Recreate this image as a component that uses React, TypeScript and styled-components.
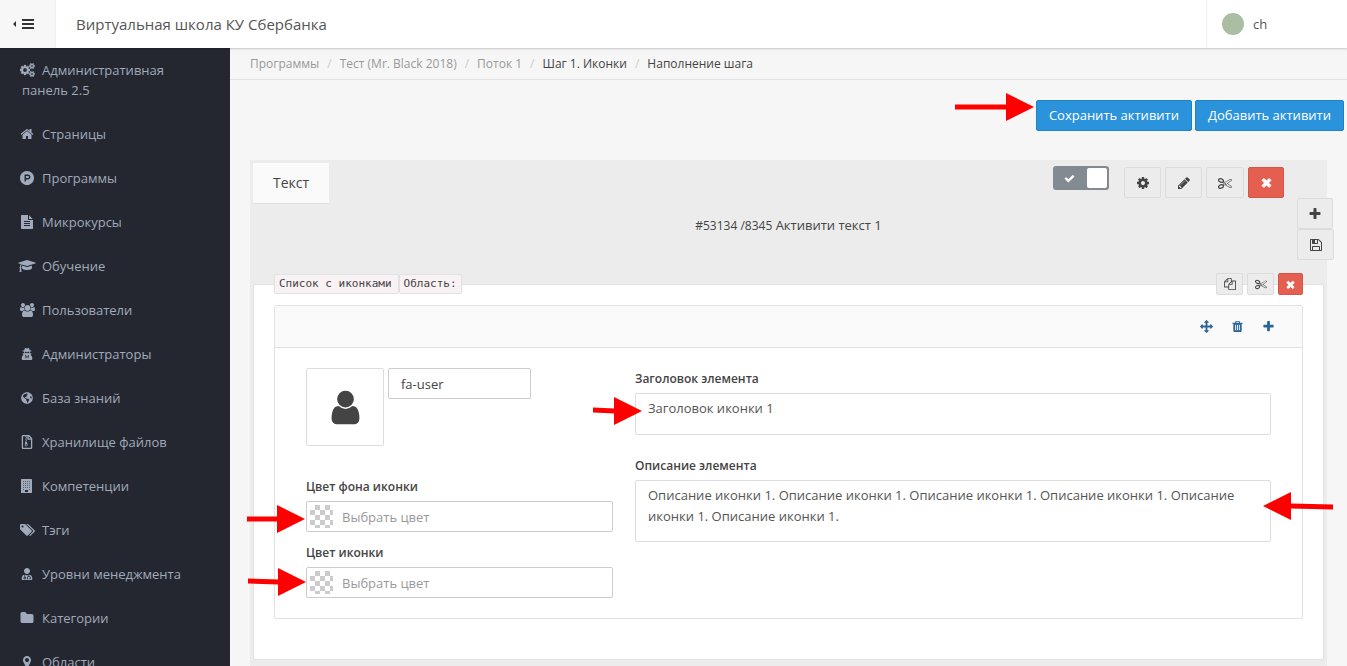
import React from "react";
import styled, { createGlobalStyle, css } from "styled-components";
import { FaGlobeAmericas, FaRegFileArchive, FaUserMd, FaUserSecret } from "react-icons/fa";

const GlobalStyle = createGlobalStyle`
  *, *::before, *::after { box-sizing: border-box; }
  body {
    margin: 0;
    background: #f6f6f6;
    color: #444;
    font: 13px/20px "Open Sans", "Noto Sans", sans-serif;
  }
  button, input, textarea { font: inherit; color: inherit; margin: 0; }
  a { color: inherit; text-decoration: none; }
`;

/* ---------- icons ---------- */

const glyphs = {
  cogs: {
    w: 1920,
    d: "M896 896q0-106-75-181t-181-75-181 75-75 181 75 181 181 75 181-75 75-181zm768 512q0-52-38-90t-90-38-90 38-38 90q0 53 37.5 90.5t90.5 37.5 90.5-37.5 37.5-90.5zm0-1024q0-52-38-90t-90-38-90 38-38 90q0 53 37.5 90.5t90.5 37.5 90.5-37.5 37.5-90.5zm-384 421v185q0 10-7 19.5t-16 10.5l-155 24q-11 35-32 76 34 48 90 115 7 11 7 20 0 12-7 19-23 30-82.5 89.5t-78.5 59.5q-11 0-21-7l-115-90q-37 19-77 31-11 108-23 155-7 24-30 24h-186q-11 0-20-7.5t-10-17.5l-23-153q-34-10-75-31l-118 89q-7 7-20 7-11 0-21-8-144-133-144-160 0-9 7-19 10-14 41-53t47-61q-23-44-35-82l-152-24q-10-1-17-9.5t-7-19.5v-185q0-10 7-19.5t16-10.5l155-24q11-35 32-76-34-48-90-115-7-11-7-20 0-12 7-20 22-30 82-89t79-59q11 0 21 7l115 90q34-18 77-32 11-108 23-154 7-24 30-24h186q11 0 20 7.5t10 17.5l23 153q34 10 75 31l118-89q8-7 20-7 11 0 21 8 144 133 144 160 0 8-7 19-12 16-42 54t-45 60q23 48 34 82l152 23q10 2 17 10.5t7 19.5zm640 533v140q0 16-149 31-12 27-30 52 51 113 51 138 0 4-4 7-122 71-124 71-8 0-46-47t-52-68q-20 2-30 2t-30-2q-14 21-52 68t-46 47q-2 0-124-71-4-3-4-7 0-25 51-138-18-25-30-52-149-15-149-31v-140q0-16 149-31 13-29 30-52-51-113-51-138 0-4 4-7 4-2 35-20t59-34 30-16q8 0 46 46.5t52 67.5q20-2 30-2t30 2q51-71 92-112l6-2q4 0 124 70 4 3 4 7 0 25-51 138 17 23 30 52 149 15 149 31zm0-1024v140q0 16-149 31-12 27-30 52 51 113 51 138 0 4-4 7-122 71-124 71-8 0-46-47t-52-68q-20 2-30 2t-30-2q-14 21-52 68t-46 47q-2 0-124-71-4-3-4-7 0-25 51-138-18-25-30-52-149-15-149-31v-140q0-16 149-31 13-29 30-52-51-113-51-138 0-4 4-7 4-2 35-20t59-34 30-16q8 0 46 46.5t52 67.5q20-2 30-2t30 2q51-71 92-112l6-2q4 0 124 70 4 3 4 7 0 25-51 138 17 23 30 52 149 15 149 31z",
  },
  home: {
    w: 1792,
    d: "M1472 992v480q0 26-19 45t-45 19h-384v-384h-256v384h-384q-26 0-45-19t-19-45v-480q0-1 .5-3t.5-3l575-474 575 474q1 2 1 6zm223-69l-62 74q-8 9-21 11h-3q-13 0-21-7l-692-577-692 577q-12 8-24 7-13-2-21-11l-62-74q-8-10-7-23.5t11-21.5l719-599q32-26 76-26t76 26l244 204v-195q0-14 9-23t23-9h192q14 0 23 9t9 23v408l219 182q10 8 11 21.5t-7 23.5z",
  },
  product: {
    w: 1792,
    d: "M1150 762q0 56-39.5 95t-95.5 39h-253v-269h253q56 0 95.5 39.5t39.5 95.5zm179 0q0-130-91.5-222t-222.5-92h-433v896h180v-269h253q130 0 222-91.5t92-221.5zm463 134q0 182-71 348t-191 286-286 191-348 71-348-71-286-191-191-286-71-348 71-348 191-286 286-191 348-71 348 71 286 191 191 286 71 348z",
  },
  fileText: {
    w: 1792,
    d: "M1596 476q14 14 28 36h-472v-472q22 14 36 28zm-476 164h544v1056q0 40-28 68t-68 28h-1344q-40 0-68-28t-28-68v-1600q0-40 28-68t68-28h800v544q0 40 28 68t68 28zm160 736v-64q0-14-9-23t-23-9h-704q-14 0-23 9t-9 23v64q0 14 9 23t23 9h704q14 0 23-9t9-23zm0-256v-64q0-14-9-23t-23-9h-704q-14 0-23 9t-9 23v64q0 14 9 23t23 9h704q14 0 23-9t9-23zm0-256v-64q0-14-9-23t-23-9h-704q-14 0-23 9t-9 23v64q0 14 9 23t23 9h704q14 0 23-9t9-23z",
  },
  graduation: {
    w: 2304,
    d: "M1774 836l18 316q4 69-82 128t-235 93.5-323 34.5-323-34.5-235-93.5-82-128l18-316 574 181q22 7 48 7t48-7zm530-324q0 23-22 31l-1120 352q-4 1-10 1t-10-1l-652-206q-43 34-71 111.5t-34 178.5q63 36 63 109 0 69-58 107l58 433q2 14-8 25-9 11-24 11h-192q-15 0-24-11-10-11-8-25l58-433q-58-38-58-107 0-73 65-111 11-207 98-330l-333-104q-22-8-22-31t22-31l1120-352q4-1 10-1t10 1l1120 352q22 8 22 31z",
  },
  users: {
    w: 1920,
    d: "M593 896q-162 5-265 128h-134q-82 0-138-40.5t-56-118.5q0-353 124-353 6 0 43.5 21t97.5 42.5 119 21.5q67 0 133-23-5 37-5 66 0 139 81 256zm1071 637q0 120-73 189.5t-194 69.5h-874q-121 0-194-69.5t-73-189.5q0-53 3.5-103.5t14-109 26.5-108.5 43-97.5 62-81 85.5-53.5 111.5-20q10 0 43 21.5t73 48 107 48 135 21.5 135-21.5 107-48 73-48 43-21.5q61 0 111.5 20t85.5 53.5 62 81 43 97.5 26.5 108.5 14 109 3.5 103.5zm-1024-1277q0 106-75 181t-181 75-181-75-75-181 75-181 181-75 181 75 75 181zm704 384q0 159-112.5 271.5t-271.5 112.5-271.5-112.5-112.5-271.5 112.5-271.5 271.5-112.5 271.5 112.5 112.5 271.5zm576 225q0 78-56 118.5t-138 40.5h-134q-103-123-265-128 81-117 81-256 0-29-5-66 66 23 133 23 59 0 119-21.5t97.5-42.5 43.5-21q124 0 124 353zm-128-609q0 106-75 181t-181 75-181-75-75-181 75-181 181-75 181 75 75 181z",
  },
  tags: {
    w: 1920,
    d: "M448 448q0-53-37.5-90.5t-90.5-37.5-90.5 37.5-37.5 90.5 37.5 90.5 90.5 37.5 90.5-37.5 37.5-90.5zm1067 576q0 53-37 90l-491 492q-39 37-91 37-53 0-90-37l-715-716q-38-37-64.5-101t-26.5-117v-416q0-52 38-90t90-38h416q53 0 117 26.5t102 64.5l715 714q37 39 37 91zm384 0q0 53-37 90l-491 492q-39 37-91 37-36 0-59-14t-53-45l470-470q37-37 37-90 0-52-37-91l-715-714q-38-38-102-64.5t-117-26.5h224q53 0 117 26.5t102 64.5l715 714q37 39 37 91z",
  },
  folder: {
    w: 1792,
    d: "M1728 608v704q0 92-66 158t-158 66h-1216q-92 0-158-66t-66-158v-960q0-92 66-158t158-66h320q92 0 158 66t66 158v32h672q92 0 158 66t66 158z",
  },
  marker: {
    w: 1792,
    d: "M1152 640q0-106-75-181t-181-75-181 75-75 181 75 181 181 75 181-75 75-181zm256 0q0 109-33 179l-364 774q-16 33-47.5 52t-67.5 19-67.5-19-46.5-52l-365-774q-33-70-33-179 0-212 150-362t362-150 362 150 150 362z",
  },
  cog: {
    w: 1792,
    d: "M1152 896q0-106-75-181t-181-75-181 75-75 181 75 181 181 75 181-75 75-181zm512-109v222q0 12-8 23t-20 13l-185 28q-19 54-39 91 35 50 107 138 10 12 10 25t-9 23q-27 37-99 108t-94 71q-12 0-26-9l-138-108q-44 23-91 38-16 136-29 186-7 28-36 28h-222q-14 0-24.5-8.5t-11.5-21.5l-28-184q-49-16-90-37l-141 107q-10 9-25 9-14 0-25-11-126-114-165-168-7-10-7-23 0-12 8-23 15-21 51-66.5t54-70.5q-27-50-41-99l-183-27q-13-2-21-12.5t-8-23.5v-222q0-12 8-23t19-13l186-28q14-46 39-92-40-57-107-138-10-12-10-24 0-10 9-23 26-36 98.5-107.5t94.5-71.5q13 0 26 10l138 107q44-23 91-38 16-136 29-186 7-28 36-28h222q14 0 24.5 8.5t11.5 21.5l28 184q49 16 90 37l142-107q9-9 24-9 13 0 25 10 129 119 165 170 7 8 7 22 0 12-8 23-15 21-51 66.5t-54 70.5q26 50 41 98l183 28q13 2 21 12.5t8 23.5z",
  },
  pencil: {
    w: 1792,
    d: "M491 1536l91-91-235-235-91 91v107h128v128h107zm523-928q0-22-22-22-10 0-17 7l-542 542q-7 7-7 17 0 22 22 22 10 0 17-7l542-542q7-7 7-17zm-54-192l416 416-832 832h-416v-416zm683 96q0 53-37 90l-166 166-416-416 166-165q36-38 90-38 53 0 91 38l235 234q37 39 37 91z",
  },
  scissors: {
    w: 1792,
    d: "M960 896q26 0 45 19t19 45-19 45-45 19-45-19-19-45 19-45 45-19zm300 64l507 398q28 20 25 56-5 35-35 51l-128 64q-13 7-29 7-17 0-31-8l-690-387-110 66q-8 4-12 5 14 49 10 97-7 77-56 147.5t-132 123.5q-132 84-277 84-136 0-222-78-90-84-79-207 7-76 56-147t131-124q132-84 278-84 83 0 151 31 9-13 22-22l122-73-122-73q-13-9-22-22-68 31-151 31-146 0-278-84-82-53-131-124t-56-147q-5-59 15.5-113t63.5-93q85-79 222-79 145 0 277 84 83 52 132 123t56 148q4 48-10 97 4 1 12 5l110 66 690-387q14-8 31-8 16 0 29 7l128 64q30 16 35 51 3 36-25 56zm-681-260q46-42 21-108t-106-117q-92-59-192-59-74 0-113 36-46 42-21 108t106 117q92 59 192 59 74 0 113-36zm-85 745q81-51 106-117t-21-108q-39-36-113-36-100 0-192 59-81 51-106 117t21 108q39 36 113 36 100 0 192-59zm178-613l96 58v-11q0-36 33-56l14-8-79-44-26 26q-3 3-10 11t-12 12q-2 2-4 3.5t-3 2.5zm224 224l96 32 736-576-128-64-768 431v113l-160 96 9 8q2 2 7 6 4 4 11 12t11 12l26 26zm704 416l128-64-520-408-177 138q-2 3-13 7z",
  },
  times: {
    w: 1792,
    d: "M1490 1322q0 40-28 68l-136 136q-28 28-68 28t-68-28l-294-294-294 294q-28 28-68 28t-68-28l-136-136q-28-28-28-68t28-68l294-294-294-294q-28-28-28-68t28-68l136-136q28-28 68-28t68 28l294 294 294-294q28-28 68-28t68 28l136 136q28 28 28 68t-28 68l-294 294 294 294q28 28 28 68z",
  },
  plus: {
    w: 1792,
    d: "M1600 736v192q0 40-28 68t-68 28h-416v416q0 40-28 68t-68 28h-192q-40 0-68-28t-28-68v-416h-416q-40 0-68-28t-28-68v-192q0-40 28-68t68-28h416v-416q0-40 28-68t68-28h192q40 0 68 28t28 68v416h416q40 0 68 28t28 68z",
  },
  floppy: {
    w: 1792,
    d: "M512 1536h768v-384h-768v384zm896 0h128v-896q0-14-10-38.5t-20-34.5l-281-281q-10-10-34-20t-39-10v416q0 40-28 68t-68 28h-576q-40 0-68-28t-28-68v-416h-128v1280h128v-416q0-40 28-68t68-28h832q40 0 68 28t28 68v416zm-384-928v-320q0-13-9.5-22.5t-22.5-9.5h-192q-13 0-22.5 9.5t-9.5 22.5v320q0 13 9.5 22.5t22.5 9.5h192q13 0 22.5-9.5t9.5-22.5zm640 32v928q0 40-28 68t-68 28h-1344q-40 0-68-28t-28-68v-1344q0-40 28-68t68-28h928q40 0 88 20t76 48l280 280q28 28 48 76t20 88z",
  },
  check: {
    w: 1792,
    d: "M1671 566q0 40-28 68l-724 724-136 136q-28 28-68 28t-68-28l-136-136-362-362q-28-28-28-68t28-68l136-136q28-28 68-28t68 28l294 295 656-657q28-28 68-28t68 28l136 136q28 28 28 68z",
  },
  files: {
    w: 1792,
    d: "M1696 384q40 0 68 28t28 68v1216q0 40-28 68t-68 28h-960q-40 0-68-28t-28-68v-288h-544q-40 0-68-28t-28-68v-672q0-40 20-88t48-76l408-408q28-28 76-48t88-20h416q40 0 68 28t28 68v328q68-40 128-40h416zm-544 213l-299 299h299v-299zm-640-384l-299 299h299v-299zm196 647l316-316v-416h-384v416q0 40-28 68t-68 28h-416v640h512v-256q0-40 20-88t48-76zm956 804v-1152h-384v416q0 40-28 68t-68 28h-416v640h896z",
  },
  arrows: {
    w: 1792,
    d: "M1792 896q0 26-19 45l-256 256q-19 19-45 19t-45-19-19-45v-128h-384v384h128q26 0 45 19t19 45-19 45l-256 256q-19 19-45 19t-45-19l-256-256q-19-19-19-45t19-45 45-19h128v-384h-384v128q0 26-19 45t-45 19-45-19l-256-256q-19-19-19-45t19-45l256-256q19-19 45-19t45 19 19 45v128h384v-384h-128q-26 0-45-19t-19-45 19-45l256-256q19-19 45-19t45 19l256 256q19 19 19 45t-19 45-45 19h-128v384h384v-128q0-26 19-45t45-19 45 19l256 256q19 19 19 45z",
  },
  trash: {
    w: 1792,
    d: "M704 1376v-704q0-14-9-23t-23-9h-64q-14 0-23 9t-9 23v704q0 14 9 23t23 9h64q14 0 23-9t9-23zm256 0v-704q0-14-9-23t-23-9h-64q-14 0-23 9t-9 23v704q0 14 9 23t23 9h64q14 0 23-9t9-23zm256 0v-704q0-14-9-23t-23-9h-64q-14 0-23 9t-9 23v704q0 14 9 23t23 9h64q14 0 23-9t9-23zm-544-992h448l-48-117q-7-9-17-11h-317q-10 2-17 11zm928 32v64q0 14-9 23t-23 9h-96v948q0 83-47 143.5t-113 60.5h-832q-66 0-113-58.5t-47-141.5v-952h-96q-14 0-23-9t-9-23v-64q0-14 9-23t23-9h309l70-167q15-37 54-63t79-26h320q40 0 79 26t54 63l70 167h309q14 0 23 9t9 23z",
  },
  user: {
    w: 1792,
    d: "M1536 1399q0 109-62.5 187t-150.5 78h-854q-88 0-150.5-78t-62.5-187q0-85 8.5-160.5t31.5-152 58.5-131 94-89 134.5-34.5q131 128 313 128t313-128q76 0 134.5 34.5t94 89 58.5 131 31.5 152 8.5 160.5zm-256-887q0 159-112.5 271.5t-271.5 112.5-271.5-112.5-112.5-271.5 112.5-271.5 271.5-112.5 271.5 112.5 112.5 271.5z",
  },
};

type GlyphName = keyof typeof glyphs;

const Glyph = ({ name, size = 14, weight = 0 }: { name: GlyphName; size?: number; weight?: number }) => (
  <svg
    height={size}
    width={(size * glyphs[name].w) / 1792}
    viewBox={`0 0 ${glyphs[name].w} 1792`}
    fill="currentColor"
    stroke="currentColor"
    strokeWidth={weight}
    aria-hidden="true"
  >
    <path d={glyphs[name].d} />
  </svg>
);

const BuildingIcon = () => (
  <svg width="12" height="14" viewBox="0 0 12 14" aria-hidden="true">
    <path fill="currentColor" d="M.5 0h10q.5 0 .5.5v13q0 .5-.5.5H.5Q0 14 0 13.500V.5Q0 0 .5 0z" />
    <path
      fill="#24272f"
      opacity=".55"
      d="M2 2v1h1V2zM4 2v1h1V2zM6 2v1h1V2zM8 2v1h1V2zM2 4v1h1V4zM4 4v1h1V4zM6 4v1h1V4zM8 4v1h1V4zM2 6v1h1V6zM4 6v1h1V6zM6 6v1h1V6zM8 6v1h1V6zM2 8v1h1V8zM4 8v1h1V8zM6 8v1h1V8zM8 8v1h1V8zM2 10v1h1v-1zM8 10v1h1v-1z"
    />
    <path fill="#24272f" d="M4 11v2h3v-2z" />
  </svg>
);

/* ---------- page frame ---------- */

const Page = styled.div`
  display: flex;
  flex-direction: column;
  height: 100vh;
  overflow: hidden;
`;

const Header = styled.header`
  position: relative;
  z-index: 1;
  display: flex;
  flex: none;
  height: 48px;
  background: #fff;
  box-shadow: 0 1px 2px rgba(0, 0, 0, 0.2);
`;

const MenuToggle = styled.button`
  display: flex;
  align-items: center;
  width: 56px;
  padding: 0 0 0 13px;
  border: 0;
  border-right: 1px solid #f0f0f0;
  background: #f7f7f7;
`;

const SiteTitle = styled.h1`
  flex: 1;
  margin: 0;
  padding-left: 20px;
  color: #555;
  font-size: 15px;
  font-weight: 400;
  line-height: 48px;
`;

const Account = styled.a`
  display: flex;
  align-items: center;
  gap: 9px;
  width: 141px;
  padding-left: 15px;
  border-left: 1px solid #eee;
  color: #555;
`;

const Avatar = styled.span`
  width: 22px;
  height: 22px;
  border-radius: 50%;
  background: #abbea3;
`;

const Columns = styled.div`
  display: flex;
  flex: 1;
  min-height: 0;
`;

const Sidebar = styled.nav`
  flex: none;
  width: 230px;
  overflow: hidden;
  background: #24272f;
`;

const SideLink = styled.a<{ $wrap?: boolean }>`
  display: block;
  padding: 12px 60px 12px 22px;
  color: #a0aabb;
  white-space: ${(p) => (p.$wrap ? "normal" : "nowrap")};
`;

const SideIcon = styled.span`
  display: inline-flex;
  justify-content: center;
  align-items: center;
  width: 18px;
  height: 20px;
  margin: 0 6px 0 -4px;
  vertical-align: top;
`;

const Main = styled.main`
  flex: 1;
  min-width: 0;
  overflow: hidden;
`;

const Breadcrumbs = styled.ol`
  display: flex;
  margin: 0;
  padding: 6px 20px 5px;
  border-bottom: 1px solid #e2e2e2;
  list-style: none;
  font-size: 12px;

  li + li::before {
    content: "/";
    padding: 0 8px;
    color: #ccc;
  }
`;

const Crumb = styled.li<{ $strong?: boolean }>`
  color: ${(p) => (p.$strong ? "#444" : "#999")};
`;

const PageActions = styled.div`
  position: relative;
  display: flex;
  gap: 3px;
  width: max-content;
  margin: 20px 3px 29px auto;
`;

const PrimaryButton = styled.button`
  height: 31px;
  padding: 0 12px 2px;
  border: 1px solid #1f83c8;
  border-radius: 2px;
  background: #2a93dc;
  color: #fff;
  font-weight: 500;
`;

/* ---------- activity ---------- */

const Activity = styled.section`
  position: relative;
  min-height: 506px;
  margin: 0 20px;
  padding: 3px;
  background: #ececec;
`;

const ActivityTop = styled.div`
  display: flex;
  justify-content: space-between;
  align-items: flex-start;
`;

const Tab = styled.a`
  padding: 0 20px;
  border-bottom: 1px solid #e0e0e0;
  background: #fafafa;
  font-size: 14px;
  line-height: 40px;
`;

const Tools = styled.div`
  display: flex;
  gap: 4px;
  padding: 4px 40px 0 0;
`;

const Switch = styled.label`
  display: flex;
  align-items: center;
  justify-content: space-between;
  width: 56px;
  height: 24px;
  margin: -1px 11px 0 0;
  padding: 0 2px 0 11px;
  border-radius: 3px;
  background: #838b92;
  color: #fff;

  input {
    appearance: none;
    width: 20px;
    height: 20px;
    border-radius: 2px;
    background: #fff;
  }
`;

const ToolButton = styled.button<{ $w: number; $small?: boolean; $danger?: boolean }>`
  display: flex;
  align-items: center;
  justify-content: center;
  width: ${(p) => p.$w}px;
  height: ${(p) => (p.$small ? 22 : 31)}px;
  padding: 0;
  border: 1px solid #dcdcdc;
  border-radius: 2px;
  background: #ececec;
  color: #444;
  ${(p) =>
    p.$danger &&
    css`
      border-color: #d25748;
      background: #e55f50;
      color: #fff;
    `}
`;

const ActivityTitle = styled.p`
  margin: 11px 0 0;
  text-align: center;

  small { font-size: 12px; }
`;

const SideTools = styled.div`
  position: absolute;
  top: 38px;
  right: -7px;
  width: 37px;
`;

const Card = styled.div`
  margin: 48px 0 0;
  padding: 0 20px 40px;
  border: 1px solid #e2e2e2;
  border-radius: 2px;
  background: #fff;
`;

const CardTop = styled.div`
  display: flex;
  justify-content: space-between;
  align-items: center;
  margin-top: -12px;
  margin-bottom: 10px;
`;

const Tags = styled.div`
  display: flex;
`;

const Tag = styled.code`
  height: 20px;
  padding: 0 4px;
  border: 1px solid #e2e2e2;
  border-radius: 2px;
  background: #f9f2f4;
  font: 11px/18px "DejaVu Sans Mono", monospace;

  &:first-child {
    padding-right: 6px;
  }
`;

const CardTools = styled.div`
  display: flex;
  gap: 4px;
`;

const Item = styled.div`
  border: 1px solid #e2e2e2;
  border-radius: 2px;
`;

const ItemHeader = styled.div`
  display: flex;
  align-items: center;
  justify-content: flex-end;
  gap: 18px;
  height: 42px;
  padding-right: 27px;
  border-bottom: 1px solid #e2e2e2;
  background: #fafafa;
`;

const LinkButton = styled.button`
  display: flex;
  padding: 0;
  border: 0;
  background: none;
  color: #2a6496;
`;

const ItemBody = styled.div`
  display: grid;
  grid-template-columns: 307fr 636fr;
  gap: 22px;
  padding: 20px 31px;
`;

const IconPicker = styled.div`
  display: flex;
  align-items: flex-start;
  gap: 4px;
  margin-bottom: 30px;
`;

const IconPreview = styled.div`
  display: flex;
  align-items: center;
  justify-content: center;
  width: 78px;
  height: 78px;
  border: 1px solid #ddd;
  border-radius: 2px;
`;

const inputLook = css`
  height: 31px;
  border: 1px solid #ccc;
  border-radius: 2px;
  background: #fff;
`;

const IconInput = styled.input`
  ${inputLook}
  width: 143px;
  padding: 0 12px;
`;

const Field = styled.div<{ $gap?: number }>`
  margin-bottom: ${(p) => p.$gap ?? 0}px;
`;

const FieldLabel = styled.label`
  display: block;
  margin-bottom: 3px;
  font-size: 12px;
  font-weight: 600;
  line-height: 22px;
`;

const Anchor = styled.div`
  position: relative;
`;

const ColorBox = styled.div`
  ${inputLook}
  display: flex;
  align-items: center;
  gap: 9px;
  padding-left: 3px;

  input {
    flex: 1;
    min-width: 0;
    padding: 0;
    border: 0;
    outline: 0;
    background: none;
  }
  input::placeholder { color: #999; opacity: 1; }
`;

const Swatch = styled.span`
  width: 23px;
  height: 23px;
  background: conic-gradient(#ccc 25%, #fff 0 50%, #ccc 0 75%, #fff 0) 0 0 / 10px 10px;
`;

const TextBox = styled.textarea<{ $h: number }>`
  display: block;
  width: 100%;
  height: ${(p) => p.$h}px;
  padding: 4px 12px;
  border: 1px solid #ddd;
  border-radius: 2px;
  background: #fff;
  color: #555;
  line-height: 21px;
  resize: none;
  overflow: hidden;
`;

/* ---------- pointer arrows ---------- */

const ArrowSvg = styled.svg<{ $top: number; $left?: number; $right?: number }>`
  position: absolute;
  top: ${(p) => p.$top}px;
  ${(p) => (p.$left !== undefined ? `left: ${p.$left}px;` : `right: ${p.$right}px;`)}
  pointer-events: none;
`;

type ArrowProps = { length: number; top: number; left?: number; right?: number; tilt?: number };

const Arrow = ({ length, top, left, right, tilt = 0 }: ArrowProps) => {
  const neck = length - 28;
  const tail = 14 - tilt;
  return (
    <ArrowSvg $top={top} $left={left} $right={right} width={length} height={28} aria-hidden="true">
      <g fill="#f00" transform={right !== undefined ? `translate(${length} 28) rotate(180)` : undefined}>
        <path d={`M0 ${tail - 2.5}L${neck + 1} 11.500v5L0 ${tail + 2.5}z`} />
        <path d={`M${neck} 0L${length} 14L${neck} 28z`} />
      </g>
    </ArrowSvg>
  );
};

/* ---------- content ---------- */

const menu: { label: string; icon: React.ReactNode }[] = [
  { label: "Административная панель 2.5", icon: <Glyph name="cogs" weight={40} /> },
  { label: "Страницы", icon: <Glyph name="home" /> },
  { label: "Программы", icon: <Glyph name="product" /> },
  { label: "Микрокурсы", icon: <Glyph name="fileText" /> },
  { label: "Обучение", icon: <Glyph name="graduation" /> },
  { label: "Пользователи", icon: <Glyph name="users" /> },
  { label: "Администраторы", icon: <FaUserSecret size={12} /> },
  { label: "База знаний", icon: <FaGlobeAmericas size={12} /> },
  { label: "Хранилище файлов", icon: <FaRegFileArchive size={14} /> },
  { label: "Компетенции", icon: <BuildingIcon /> },
  { label: "Тэги", icon: <Glyph name="tags" /> },
  { label: "Уровни менеджмента", icon: <FaUserMd size={12} /> },
  { label: "Категории", icon: <Glyph name="folder" /> },
  { label: "Области", icon: <Glyph name="marker" /> },
];

const crumbs = ["Программы", "Тест (Mr. Black 2018)", "Поток 1", "Шаг 1. Иконки", "Наполнение шага"];

export default function App() {
  return (
    <>
      <GlobalStyle />
      <Page>
        <Header>
          <MenuToggle type="button" aria-label="Меню">
            <svg width="22" height="12" viewBox="0 0 22 12" fill="#333" aria-hidden="true">
              <path d="M3 3v6L0 6zM9 1h12v2H9zM9 5h12v2H9zM9 9h12v2H9z" />
            </svg>
          </MenuToggle>
          <SiteTitle>Виртуальная школа КУ Сбербанка</SiteTitle>
          <Account href="#">
            <Avatar />
            ch
          </Account>
        </Header>
        <Columns>
          <Sidebar>
            {menu.map((m, i) => (
              <SideLink key={m.label} href="#" $wrap={i === 0}>
                <SideIcon>{m.icon}</SideIcon>
                {m.label}
              </SideLink>
            ))}
          </Sidebar>
          <Main>
            <Breadcrumbs>
              {crumbs.map((c, i) => (
                <Crumb key={c} $strong={i > 2}>
                  {i < 4 ? <a href="#">{c}</a> : c}
                </Crumb>
              ))}
            </Breadcrumbs>
            <PageActions>
              <PrimaryButton type="button">Сохранить активити</PrimaryButton>
              <PrimaryButton type="button">Добавить активити</PrimaryButton>
              <Arrow length={79} top={-7} left={-81} />
            </PageActions>

            <Activity>
              <ActivityTop>
                <Tab href="#">Текст</Tab>
                <Tools>
                  <Switch>
                    <Glyph name="check" size={11} />
                    <input type="checkbox" defaultChecked aria-label="Активно" />
                  </Switch>
                  <ToolButton type="button" $w={37} aria-label="Настройки"><Glyph name="cog" /></ToolButton>
                  <ToolButton type="button" $w={37} aria-label="Изменить"><Glyph name="pencil" /></ToolButton>
                  <ToolButton type="button" $w={38} aria-label="Вырезать"><Glyph name="scissors" /></ToolButton>
                  <ToolButton type="button" $w={36} $danger aria-label="Удалить"><Glyph name="times" size={13} weight={130} /></ToolButton>
                </Tools>
              </ActivityTop>
              <ActivityTitle>
                <small>#53134 /8345</small> Активити текст 1
              </ActivityTitle>
              <SideTools>
                <ToolButton type="button" $w={36} aria-label="Добавить"><Glyph name="plus" /></ToolButton>
                <ToolButton type="button" $w={37} aria-label="Сохранить"><Glyph name="floppy" /></ToolButton>
              </SideTools>

              <Card>
                <CardTop>
                  <Tags>
                    <Tag>Список с иконками</Tag>
                    <Tag>Область:</Tag>
                  </Tags>
                  <CardTools>
                    <ToolButton type="button" $small $w={27} aria-label="Копировать"><Glyph name="files" size={12} /></ToolButton>
                    <ToolButton type="button" $small $w={27} aria-label="Вырезать"><Glyph name="scissors" size={12} /></ToolButton>
                    <ToolButton type="button" $small $w={25} $danger aria-label="Удалить"><Glyph name="times" size={11} weight={130} /></ToolButton>
                  </CardTools>
                </CardTop>

                <Item>
                  <ItemHeader>
                    <LinkButton type="button" aria-label="Переместить"><Glyph name="arrows" size={13} /></LinkButton>
                    <LinkButton type="button" aria-label="Удалить"><Glyph name="trash" size={13} /></LinkButton>
                    <LinkButton type="button" aria-label="Добавить"><Glyph name="plus" size={13} /></LinkButton>
                  </ItemHeader>
                  <ItemBody>
                    <div>
                      <IconPicker>
                        <IconPreview><Glyph name="user" size={39} /></IconPreview>
                        <IconInput defaultValue="fa-user" aria-label="Иконка" />
                      </IconPicker>
                      <Field $gap={10}>
                        <FieldLabel htmlFor="bg-color">Цвет фона иконки</FieldLabel>
                        <Anchor>
                          <ColorBox>
                            <Swatch />
                            <input id="bg-color" placeholder="Выбрать цвет" />
                          </ColorBox>
                          <Arrow length={58} top={4} left={-59} />
                        </Anchor>
                      </Field>
                      <Field>
                        <FieldLabel htmlFor="icon-color">Цвет иконки</FieldLabel>
                        <Anchor>
                          <ColorBox>
                            <Swatch />
                            <input id="icon-color" placeholder="Выбрать цвет" />
                          </ColorBox>
                          <Arrow length={58} top={1} left={-58} tilt={1} />
                        </Anchor>
                      </Field>
                    </div>
                    <div>
                      <Field $gap={20}>
                        <FieldLabel htmlFor="item-title">Заголовок элемента</FieldLabel>
                        <Anchor>
                          <TextBox id="item-title" $h={42} defaultValue="Заголовок иконки 1" />
                          <Arrow length={49} top={4} left={-42} tilt={1} />
                        </Anchor>
                      </Field>
                      <Field>
                        <FieldLabel htmlFor="item-text">Описание элемента</FieldLabel>
                        <Anchor>
                          <TextBox
                            id="item-text"
                            $h={62}
                            defaultValue="Описание иконки 1. Описание иконки 1. Описание иконки 1. Описание иконки 1. Описание иконки 1. Описание иконки 1."
                          />
                          <Arrow length={70} top={12} right={-62} tilt={1} />
                        </Anchor>
                      </Field>
                    </div>
                  </ItemBody>
                </Item>
              </Card>
            </Activity>
          </Main>
        </Columns>
      </Page>
    </>
  );
}
